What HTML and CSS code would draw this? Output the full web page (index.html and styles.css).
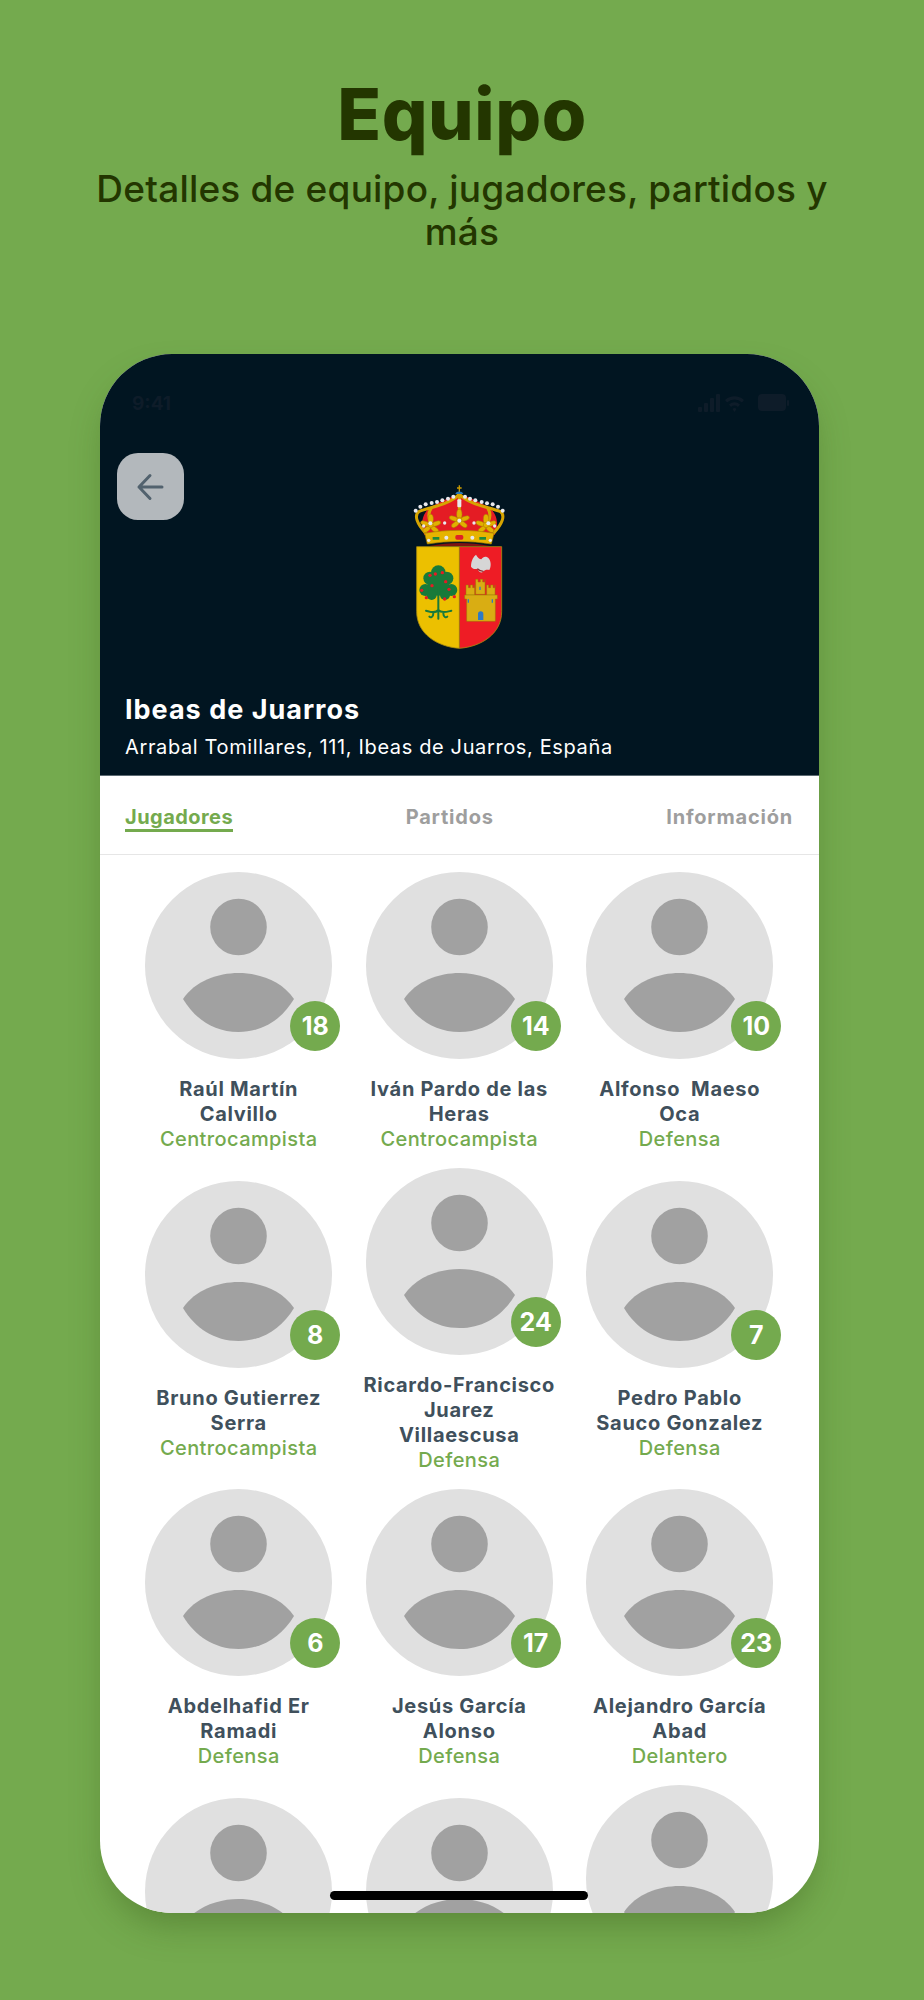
FILE: index.html
```html
<!DOCTYPE html>
<html lang="es">
<head>
<meta charset="utf-8">
<title>Equipo</title>
<link rel="stylesheet" href="styles.css">
</head>
<body>
<svg class="defs" width="0" height="0" aria-hidden="true">
  <symbol id="person" viewBox="0 0 187 187">
    <circle cx="93.5" cy="93.5" r="93.5" fill="#e0e0e0"/>
    <circle cx="93.5" cy="55" r="28.3" fill="#a1a1a1"/>
    <path d="M38 127C50 109 73 101 93.5 101C114 101 137 109 149 127C137 147 118 160 93.5 160C69 160 50 147 38 127Z" fill="#a1a1a1"/>
  </symbol>
</svg>
<main class="page">
  <header class="hero">
    <h1 class="hero-title">Equipo</h1>
    <p class="hero-sub">Detalles de equipo, jugadores, partidos y más</p>
  </header>
  <section class="phone">
    <div class="team-head">
      <div class="status">
        <span class="status-time">9:41</span>
        <svg class="status-icons" width="92" height="22" viewBox="0 0 92 22">
          <g fill="#0e1c29">
            <rect x="0" y="15" width="4" height="5" rx="1"/><rect x="6" y="11" width="4" height="9" rx="1"/><rect x="12" y="6" width="4" height="14" rx="1"/><rect x="18" y="2" width="4" height="18" rx="1"/>
            <path d="M27 8a14 14 0 0 1 19 0l-2 2.500a11 11 0 0 0-15 0ZM31 12.500a8 8 0 0 1 11 0l-2 2.500a5 5 0 0 0-7 0ZM34.500 17a3 3 0 0 1 4 0l-2 3Z"/>
            <rect x="60" y="2" width="28" height="17" rx="4"/><rect x="89" y="8" width="2" height="6" rx="1"/>
          </g>
        </svg>
      </div>
      <button class="back" type="button" aria-label="Volver">
        <svg width="30" height="30" viewBox="0 0 30 30" fill="none" stroke="#52626e" stroke-width="3" stroke-linecap="round" stroke-linejoin="round"><path d="M26 15H3M14 3.500 3 15l11 11.500"/></svg>
      </button>
      <svg class="crest" width="140" height="190" viewBox="0 0 420 570">
        <defs>
          <g id="fleur" fill="#e2b000" stroke="#a87f00" stroke-width="1.500">
            <ellipse cx="0" cy="-17" rx="8" ry="15"/>
            <ellipse cx="-16" cy="-4" rx="15" ry="7" transform="rotate(20 -16 -4)"/>
            <ellipse cx="16" cy="-4" rx="15" ry="7" transform="rotate(-20 16 -4)"/>
            <ellipse cx="-12" cy="13" rx="13" ry="7" transform="rotate(-35 -12 13)"/>
            <ellipse cx="12" cy="13" rx="13" ry="7" transform="rotate(35 12 13)"/>
            <circle r="8"/>
          </g>
        </defs>
        <path d="M103 195C86 150 104 118 135 104C165 88 190 78 208 76C228 78 252 88 282 104C314 118 332 150 314 195Z" fill="#e41c24"/>
        <g fill="none" stroke="#d6a400" stroke-width="9" stroke-linecap="round">
          <path d="M106 188C82 162 70 136 88 124C128 110 182 102 208 72C234 102 290 110 330 124C348 136 336 162 312 188"/>
          <path d="M208 84V140M123 116C112 132 116 146 122 158M294 116C304 132 300 146 294 158"/>
        </g>
        <use href="#fleur" x="208" y="150"/>
        <use href="#fleur" x="122" y="165"/>
        <use href="#fleur" x="288" y="165"/>
        <path d="M104 190C170 178 245 178 312 190L304 222C240 212 176 212 112 222Z" fill="#e6b400" stroke="#a87f00" stroke-width="2"/>
        <rect x="196" y="195" width="24" height="14" rx="5" fill="#df2027"/>
        <path d="M128 205h20M268 205h20" stroke="#1f8a3c" stroke-width="8"/>
        <path d="M118 228C180 216 238 216 300 228Z" fill="#7d1313"/>
        <g fill="#e9e9ee">
          <circle cx="77" cy="122" r="6"/><circle cx="91" cy="110" r="6"/><circle cx="107" cy="103" r="6"/><circle cx="125" cy="99" r="6"/><circle cx="141" cy="96" r="6"/><circle cx="157" cy="91" r="6"/><circle cx="174" cy="86" r="6"/><circle cx="190" cy="80" r="6"/>
          <circle cx="225" cy="80" r="6"/><circle cx="240" cy="86" r="6"/><circle cx="256" cy="91" r="6"/><circle cx="275" cy="96" r="6"/><circle cx="291" cy="100" r="6"/><circle cx="308" cy="103" r="6"/><circle cx="324" cy="110" r="6"/><circle cx="338" cy="122" r="6"/>
          <rect x="202" y="88" width="12" height="24" rx="3"/><circle cx="208" cy="152" r="6"/><circle cx="121" cy="160" r="6"/><circle cx="295" cy="160" r="6"/><circle cx="101" cy="168" r="5"/><circle cx="314" cy="168" r="5"/><circle cx="164" cy="159" r="5"/><circle cx="252" cy="159" r="5"/>
          <circle cx="116" cy="211" r="5"/><circle cx="169" cy="203" r="6"/><circle cx="247" cy="203" r="6"/><circle cx="301" cy="211" r="5"/>
        </g>
        <path d="M208 46V68M201 54h14" stroke="#c99a00" stroke-width="4"/>
        <path d="M196 72C198 62 218 62 220 72Z" fill="#2a78b8"/>
        <path d="M80 230H208V535C140 530 80 490 80 425Z" fill="#ecc000"/>
        <path d="M208 230H335V425C335 490 276 530 208 535Z" fill="#ee1c25"/>
        <path d="M80 230H335V425C335 490 276 530 208 535C140 530 80 490 80 425ZM208 230V535" fill="none" stroke="#a78a10" stroke-width="2.500"/>
        <g fill="#187a3a">
          <circle cx="145" cy="308" r="22"/><circle cx="120" cy="325" r="20"/><circle cx="170" cy="325" r="20"/><circle cx="106" cy="360" r="18"/><circle cx="184" cy="360" r="18"/><circle cx="145" cy="345" r="32"/><circle cx="125" cy="375" r="15"/><circle cx="165" cy="375" r="15"/>
        </g>
        <path d="M145 355V420M145 420C135 432 120 425 108 422M145 420C155 432 172 425 184 422M145 420V446M130 430C130 442 122 444 118 440M160 430C160 442 168 444 172 440" fill="none" stroke="#187a3a" stroke-width="6" stroke-linecap="round"/>
        <g fill="#e41c24">
          <circle cx="120" cy="316" r="5"/><circle cx="136" cy="312" r="5"/><circle cx="157" cy="308" r="5"/><circle cx="167" cy="335" r="5"/><circle cx="126" cy="347" r="5"/><circle cx="177" cy="358" r="5"/><circle cx="95" cy="361" r="5"/><circle cx="109" cy="383" r="5"/><circle cx="164" cy="387" r="5"/><circle cx="193" cy="380" r="5"/>
        </g>
        <path d="M243 290C243 270 252 258 258 254C262 262 268 268 274 268C280 258 290 258 297 266C304 276 303 290 298 300C290 298 284 300 280 304C275 312 266 306 262 296C256 298 248 298 243 290Z" fill="#d6d6d6"/>
        <path d="M262 296c6 6 12 8 18 8" stroke="#8e2a2e" stroke-width="4" fill="none"/>
        <g fill="#d9ad13" stroke="#9b7b05" stroke-width="1.500">
          <path d="M228 345h7v8h6v-8h7v8h6v-8h0v30h-26Z"/>
          <path d="M257 328h7v8h7v-8h7v8h7v-8h0v45h-28Z"/>
          <path d="M290 345h6v8h6v-8h7v8h6v-8v30h-25Z"/>
          <path d="M224 375h98v12h-6v67h-86v-67h-6Z"/>
        </g>
        <path d="M264 450v-18a8 8 0 0 1 16 0v18Z" fill="#2f7ac4"/>
        <path d="M233 388h4v10h-4ZM268 350h4v10h-4ZM305 388h4v10h-4Z" fill="#2f7ac4"/>
      </svg>
      <div class="team-info">
        <h2 class="team-name">Ibeas de Juarros</h2>
        <p class="team-address">Arrabal Tomillares, 111, Ibeas de Juarros, España</p>
      </div>
    </div>
    <nav class="tabs">
      <a class="tab tab-active">Jugadores</a>
      <a class="tab">Partidos</a>
      <a class="tab">Información</a>
    </nav>
    <div class="players">
      <article class="player">
        <div class="avatar"><svg class="photo"><use href="#person"/></svg><span class="badge">18</span></div>
        <h3 class="name">Raúl Martín<br>Calvillo</h3><p class="role">Centrocampista</p>
      </article>
      <article class="player">
        <div class="avatar"><svg class="photo"><use href="#person"/></svg><span class="badge">14</span></div>
        <h3 class="name">Iván Pardo de las<br>Heras</h3><p class="role">Centrocampista</p>
      </article>
      <article class="player">
        <div class="avatar"><svg class="photo"><use href="#person"/></svg><span class="badge">10</span></div>
        <h3 class="name">Alfonso&nbsp; Maeso<br>Oca</h3><p class="role">Defensa</p>
      </article>
      <article class="player">
        <div class="avatar"><svg class="photo"><use href="#person"/></svg><span class="badge">8</span></div>
        <h3 class="name">Bruno Gutierrez<br>Serra</h3><p class="role">Centrocampista</p>
      </article>
      <article class="player">
        <div class="avatar"><svg class="photo"><use href="#person"/></svg><span class="badge">24</span></div>
        <h3 class="name">Ricardo-Francisco<br>Juarez<br>Villaescusa</h3><p class="role">Defensa</p>
      </article>
      <article class="player">
        <div class="avatar"><svg class="photo"><use href="#person"/></svg><span class="badge">7</span></div>
        <h3 class="name">Pedro Pablo<br>Sauco Gonzalez</h3><p class="role">Defensa</p>
      </article>
      <article class="player">
        <div class="avatar"><svg class="photo"><use href="#person"/></svg><span class="badge">6</span></div>
        <h3 class="name">Abdelhafid Er<br>Ramadi</h3><p class="role">Defensa</p>
      </article>
      <article class="player">
        <div class="avatar"><svg class="photo"><use href="#person"/></svg><span class="badge">17</span></div>
        <h3 class="name">Jesús García<br>Alonso</h3><p class="role">Defensa</p>
      </article>
      <article class="player">
        <div class="avatar"><svg class="photo"><use href="#person"/></svg><span class="badge">23</span></div>
        <h3 class="name">Alejandro García<br>Abad</h3><p class="role">Delantero</p>
      </article>
      <article class="player player-clipped">
        <div class="avatar"><svg class="photo"><use href="#person"/></svg></div>
      </article>
      <article class="player player-clipped">
        <div class="avatar"><svg class="photo"><use href="#person"/></svg></div>
      </article>
      <article class="player player-clipped-tall">
        <div class="avatar"><svg class="photo"><use href="#person"/></svg></div>
      </article>
    </div>
    <div class="home-bar"></div>
  </section>
</main>
</body>
</html>
```
FILE: styles.css
```css
* { box-sizing: border-box; }
html, body { margin: 0; padding: 0; }
body { background: #74aa4e; font-family: "Inter", "Noto Sans", sans-serif; }
.defs { position: absolute; }
.page { height: 2000px; overflow: hidden; padding-top: 75px; display: flex; flex-direction: column; align-items: center; }

.hero { width: 780px; text-align: center; color: #233600; height: 279px; }
.hero-title { margin: 0; font-family: "Inter", sans-serif; font-size: 72px; line-height: 78px; font-weight: 800; letter-spacing: .5px; }
.hero-sub { margin: 14px 0 0; font-family: "Inter", sans-serif; font-size: 37px; line-height: 43px; font-weight: 500; letter-spacing: .2px; }

.phone { position: relative; width: 719px; height: 1559px; margin-right: 5px; border-radius: 72px; background: #fff; overflow: hidden; flex: none; box-shadow: 0 18px 36px -8px rgba(50, 80, 20, .4); }

.team-head { position: relative; height: 422px; background: #011521; border-bottom: 1px solid #5c6a72; color: #fff; display: flex; flex-direction: column; align-items: center; }
.status { width: 100%; height: 116px; flex: none; padding: 38px 29px 0 32px; display: flex; justify-content: space-between; align-items: flex-start; }
.status-time { font-size: 19px; font-weight: 700; line-height: 24px; color: #0e1c29; }
.back { position: absolute; left: 17px; top: 99px; width: 67px; height: 67px; padding: 0; border: 0; border-radius: 21px; background: #b3b8bc; display: flex; align-items: center; justify-content: center; }
.crest { flex: none; }
.team-info { align-self: stretch; padding: 34px 25px 0; }
.team-name { margin: 0; font-size: 27px; line-height: 32px; font-weight: 700; letter-spacing: 1px; }
.team-address { margin: 7px 0 0; font-size: 20px; line-height: 28px; font-weight: 400; letter-spacing: .63px; }

.tabs { height: 79px; padding: 8px 26px 0 25px; display: flex; justify-content: space-between; align-items: center; border-bottom: 1px solid #e6e6e6; }
.tab { font-size: 20px; font-weight: 700; line-height: 23px; letter-spacing: .8px; color: #9e9e9e; border-bottom: 3px solid transparent; }
.tab-active { color: #74aa4e; border-bottom-color: #74aa4e; letter-spacing: .45px; }

.players { padding: 17px 28.500px 0; display: grid; grid-template-columns: repeat(3, 220.5px); row-gap: 16px; align-items: center; justify-items: center; }
.player { width: 200px; text-align: center; display: flex; flex-direction: column; align-items: center; }
.player-clipped { width: 200px; height: 280px; }
.player-clipped-tall { width: 200px; height: 305px; }
.avatar { position: relative; width: 187px; height: 187px; margin-bottom: 18px; }
.photo { display: block; width: 187px; height: 187px; }
.badge { position: absolute; right: -8px; bottom: 8px; width: 50px; height: 50px; border-radius: 50%; background: #74aa4e; color: #fff; font-size: 25px; font-weight: 700; line-height: 50px; text-align: center; }
.name { margin: 0; font-size: 20px; line-height: 25px; font-weight: 700; color: #40505c; white-space: nowrap; letter-spacing: .7px; }
.role { margin: 0; font-size: 20px; line-height: 25px; font-weight: 500; color: #74aa4e; letter-spacing: .4px; }

.home-bar { position: absolute; left: 230px; bottom: 13px; width: 258px; height: 9px; border-radius: 5px; background: #000; }
```
